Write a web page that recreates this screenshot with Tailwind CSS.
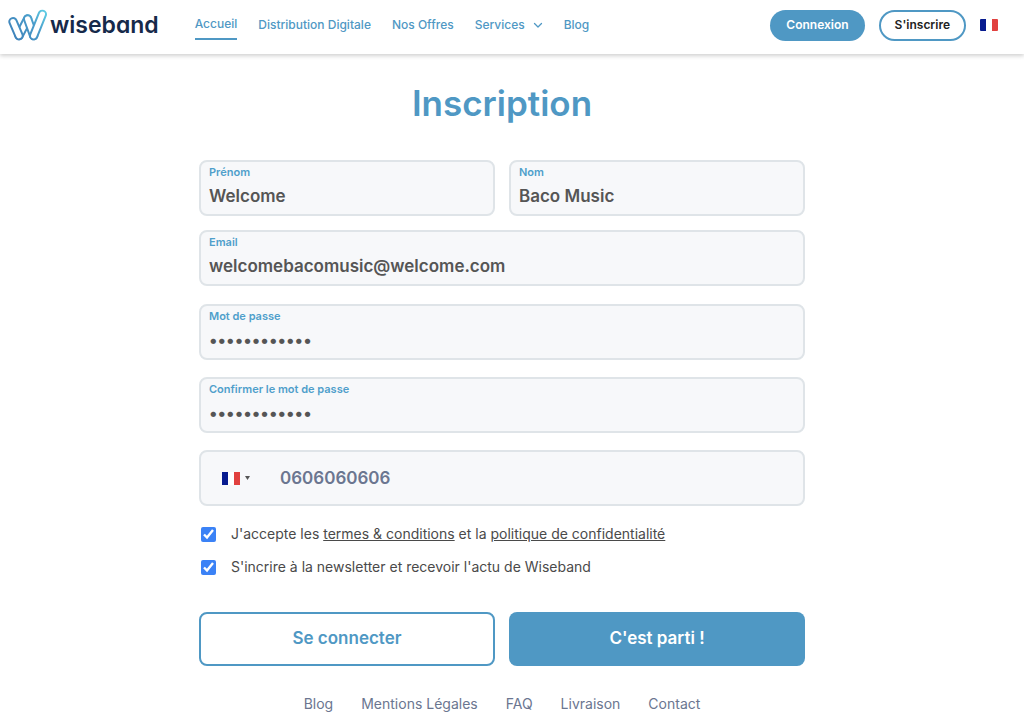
<!DOCTYPE html>
<html lang="fr">
<head>
    <meta charset="UTF-8">
    <meta name="viewport" content="width=device-width, initial-scale=1.0">
    <title>Inscription - Wiseband</title>
    <script src="https://cdn.jsdelivr.net/npm/@tailwindcss/browser@4"></script>
</head>
<body class="bg-white font-['Inter',sans-serif] text-[#4a4a4a]">
    <!-- Header -->
    <header class="flex h-[54px] items-center pb-1 pl-2 pr-[26px] shadow-[0_2px_4px_rgba(0,0,0,0.18)]">
        <a href="#" class="flex items-center text-[23px] font-semibold leading-8 text-[#16294a] [font-feature-settings:'cv11']">
            <svg class="mr-0.5 h-8 w-10" viewBox="0 0 120 96" fill="none" stroke-linecap="round" aria-hidden="true">
                <defs>
                    <linearGradient id="wave" gradientUnits="userSpaceOnUse" x1="10" y1="90" x2="115" y2="5">
                        <stop offset="0" stop-color="#3d7fb8"/>
                        <stop offset="0.6" stop-color="#4a9cca"/>
                        <stop offset="1" stop-color="#5fd0e6"/>
                    </linearGradient>
                </defs>
                <path d="M33 80 59 30" stroke="url(#wave)" stroke-width="28"/>
                <path d="M33 80 59 30" stroke="#fff" stroke-width="16"/>
                <path d="M15 38 33 80" stroke="url(#wave)" stroke-width="28"/>
                <path d="M15 38 33 80" stroke="#fff" stroke-width="16"/>
                <path d="M59 30 77 80" stroke="url(#wave)" stroke-width="28"/>
                <path d="M59 30 77 80" stroke="#fff" stroke-width="16"/>
                <path d="M77 80 103 16" stroke="url(#wave)" stroke-width="28"/>
                <path d="M77 80 103 16" stroke="#fff" stroke-width="16"/>
            </svg>
            wiseband
        </a>
        <nav class="ml-9 flex items-center gap-[21px] text-xs/5 font-medium text-[#4f98c4]">
            <a href="#" class="border-b-2 border-[#4f98c4] pt-1 pb-1">Accueil</a>
            <a href="#">Distribution Digitale</a>
            <a href="#">Nos Offres</a>
            <button type="button" class="flex items-center gap-2">
                Services
                <svg class="size-2.5" viewBox="0 0 10 10" fill="none" stroke="currentColor" stroke-width="1.3" stroke-linecap="round" stroke-linejoin="round"><path d="M1.500 3.500 5 7l3.500-3.500"/></svg>
            </button>
            <a href="#">Blog</a>
        </nav>
        <div class="ml-auto flex items-center gap-3.5 text-xs font-semibold">
            <button type="button" class="h-[31px] rounded-full bg-[#4f98c4] px-4 text-white">Connexion</button>
            <button type="button" class="h-[31px] rounded-full border-2 border-[#4f98c4] px-3.5 text-[#222]">S'inscrire</button>
            <button type="button" aria-label="Français" class="flex h-3 w-[18px] overflow-hidden rounded-[1px]">
                <span class="h-full flex-1 bg-[#071b8f]"></span>
                <span class="h-full flex-1 bg-white"></span>
                <span class="h-full flex-1 bg-[#e1413f]"></span>
            </button>
        </div>
    </header>

    <main class="pr-5">
        <div class="mx-auto max-w-[606px]">
            <h1 class="pt-6 text-center text-[35px]/[50px] font-semibold text-[#4f98c4]">Inscription</h1>

            <form class="mt-8">
                <div class="grid grid-cols-2 gap-3.5">
                    <div class="h-14 rounded-lg border-2 border-[#dfe4e8] bg-[#f7f8fa] px-2 pt-0.5">
                        <label for="firstname" class="block text-[11px] font-semibold leading-4 text-[#4f9fcb]">Prénom</label>
                        <input id="firstname" type="text" value="Welcome" class="block h-8 w-full bg-transparent text-[17px] font-semibold text-[#555] outline-none">
                    </div>
                    <div class="h-14 rounded-lg border-2 border-[#dfe4e8] bg-[#f7f8fa] px-2 pt-0.5">
                        <label for="lastname" class="block text-[11px] font-semibold leading-4 text-[#4f9fcb]">Nom</label>
                        <input id="lastname" type="text" value="Baco Music" class="block h-8 w-full bg-transparent text-[17px] font-semibold text-[#555] outline-none">
                    </div>
                </div>
                <div class="mt-3.5 h-14 rounded-lg border-2 border-[#dfe4e8] bg-[#f7f8fa] px-2 pt-0.5">
                    <label for="email" class="block text-[11px] font-semibold leading-4 text-[#4f9fcb]">Email</label>
                    <input id="email" type="email" value="welcomebacomusic@welcome.com" class="block h-8 w-full bg-transparent text-[17px] font-semibold text-[#555] outline-none">
                </div>
                <div class="mt-[18px] h-14 rounded-lg border-2 border-[#dfe4e8] bg-[#f7f8fa] px-2 pt-0.5">
                    <label for="password" class="block text-[11px] font-semibold leading-4 text-[#4f9fcb]">Mot de passe</label>
                    <input id="password" type="password" value="wiseband2023" class="block h-8 w-full bg-transparent text-[17px] font-semibold text-[#555] outline-none">
                </div>
                <div class="mt-[17px] h-14 rounded-lg border-2 border-[#dfe4e8] bg-[#f7f8fa] px-2 pt-0.5">
                    <label for="confirm" class="block text-[11px] font-semibold leading-4 text-[#4f9fcb]">Confirmer le mot de passe</label>
                    <input id="confirm" type="password" value="wiseband2023" class="block h-8 w-full bg-transparent text-[17px] font-semibold text-[#555] outline-none">
                </div>
                <div class="mt-[17px] flex h-14 items-center rounded-lg border-2 border-[#dfe4e8] bg-[#f7f8fa] pl-[21px] pr-2">
                    <button type="button" aria-label="Indicatif France" class="flex items-center gap-[5px]">
                        <span class="flex h-[13px] w-[18px]">
                            <span class="flex-1 bg-[#071b8f]"></span>
                            <span class="flex-1 bg-white"></span>
                            <span class="flex-1 bg-[#e1413f]"></span>
                        </span>
                        <svg class="h-1 w-[5px]" viewBox="0 0 5 4" fill="#555"><path d="M0 0h5L2.500 4z"/></svg>
                    </button>
                    <input type="tel" aria-label="Téléphone" value="0606060606" class="ml-[30px] h-8 min-w-0 flex-1 bg-transparent text-[17px] font-semibold text-[#6b7690] outline-none">
                </div>

                <div class="mt-[18px] flex items-center pl-0.5 text-sm leading-5">
                    <input id="terms" type="checkbox" checked class="mr-[15px] size-[15px] shrink-0 accent-[#3b82f6]">
                    <label for="terms">J'accepte les <a href="#" class="underline">termes &amp; conditions</a> et la <a href="#" class="underline">politique de confidentialité</a></label>
                </div>
                <div class="mt-[13px] flex items-center pl-0.5 text-sm leading-5">
                    <input id="newsletter" type="checkbox" checked class="mr-[15px] size-[15px] shrink-0 accent-[#3b82f6]">
                    <label for="newsletter">S'incrire à la newsletter et recevoir l'actu de Wiseband</label>
                </div>

                <div class="mt-[35px] grid grid-cols-2 gap-3.5 text-[17px] font-semibold">
                    <button type="button" class="h-[54px] rounded-lg border-2 border-[#4f98c4] bg-white text-[#4f98c4]">Se connecter</button>
                    <button type="submit" class="h-[54px] rounded-lg bg-[#4f98c4] text-white">C'est parti !</button>
                </div>
            </form>
        </div>

        <footer class="mt-7 flex justify-center gap-7 text-sm leading-5 text-[#6b7690]">
            <a href="#">Blog</a>
            <a href="#">Mentions Légales</a>
            <a href="#">FAQ</a>
            <a href="#">Livraison</a>
            <a href="#">Contact</a>
        </footer>
    </main>
</body>
</html>
